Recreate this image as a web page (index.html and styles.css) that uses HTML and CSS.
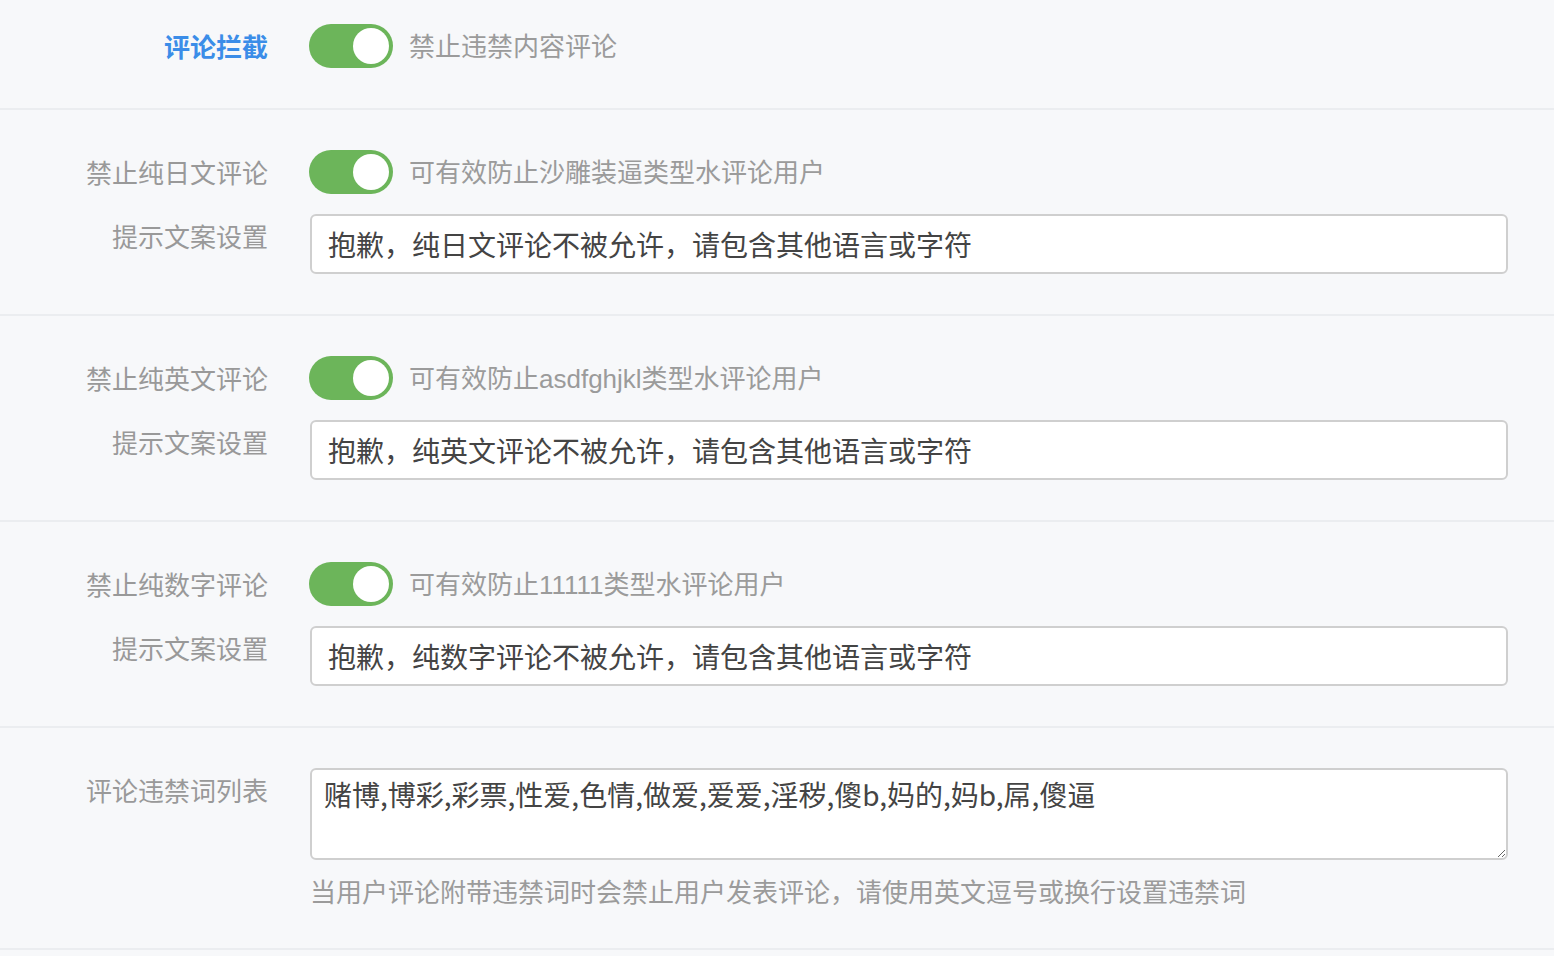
FILE: index.html
```html
<!DOCTYPE html>
<html lang="zh-CN">
<head>
<meta charset="utf-8">
<title>评论拦截</title>
<link rel="stylesheet" href="styles.css">
</head>
<body>
<div class="settings">
  <section class="group group-first">
    <div class="row">
      <div class="label label-title">评论拦截</div>
      <div class="control">
        <span class="switch on"><span class="knob"></span></span>
        <span class="desc">禁止违禁内容评论</span>
      </div>
    </div>
  </section>

  <section class="group">
    <div class="row">
      <div class="label">禁止纯日文评论</div>
      <div class="control">
        <span class="switch on"><span class="knob"></span></span>
        <span class="desc">可有效防止沙雕装逼类型水评论用户</span>
      </div>
    </div>
    <div class="row">
      <div class="label">提示文案设置</div>
      <div class="control">
        <input class="input" type="text" value="抱歉，纯日文评论不被允许，请包含其他语言或字符">
      </div>
    </div>
  </section>

  <section class="group">
    <div class="row">
      <div class="label">禁止纯英文评论</div>
      <div class="control">
        <span class="switch on"><span class="knob"></span></span>
        <span class="desc">可有效防止asdfghjkl类型水评论用户</span>
      </div>
    </div>
    <div class="row">
      <div class="label">提示文案设置</div>
      <div class="control">
        <input class="input" type="text" value="抱歉，纯英文评论不被允许，请包含其他语言或字符">
      </div>
    </div>
  </section>

  <section class="group">
    <div class="row">
      <div class="label">禁止纯数字评论</div>
      <div class="control">
        <span class="switch on"><span class="knob"></span></span>
        <span class="desc">可有效防止11111类型水评论用户</span>
      </div>
    </div>
    <div class="row">
      <div class="label">提示文案设置</div>
      <div class="control">
        <input class="input" type="text" value="抱歉，纯数字评论不被允许，请包含其他语言或字符">
      </div>
    </div>
  </section>

  <section class="group group-last">
    <div class="row">
      <div class="label">评论违禁词列表</div>
      <div class="control control-col">
        <textarea class="textarea">赌博,博彩,彩票,性爱,色情,做爱,爱爱,淫秽,傻b,妈的,妈b,屌,傻逼</textarea>
        <div class="help">当用户评论附带违禁词时会禁止用户发表评论，请使用英文逗号或换行设置违禁词</div>
      </div>
    </div>
  </section>
</div>
</body>
</html>
```

FILE: styles.css
```css
html, body {
  margin: 0;
  padding: 0;
  background: #f7f8fa;
}

body {
  font-family: "Noto Sans CJK SC", "Noto Sans", sans-serif;
  font-size: 26px;
  color: #999;
}

.settings {
  width: 100%;
}

.group {
  display: flex;
  flex-direction: column;
  gap: 20px;
  padding: 40px 46px 40px 0;
  border-bottom: 2px solid #ebedf0;
}

.group-first {
  padding-top: 24px;
}

.group-last {
  padding-bottom: 42px;
}

.row {
  display: flex;
  align-items: flex-start;
  gap: 42px;
}

.label {
  width: 268px;
  flex: none;
  text-align: right;
  line-height: 44px;
  color: #999;
  white-space: nowrap;
}

.label-title {
  color: #3b8de8;
  font-weight: 700;
}

.control {
  flex: 1;
  display: flex;
  align-items: center;
  gap: 16px;
  min-width: 0;
}

.control-col {
  flex-direction: column;
  align-items: stretch;
  gap: 16px;
}

.switch {
  position: relative;
  width: 84px;
  height: 44px;
  margin-left: -1px;
  border-radius: 22px;
  background: #6cb55a;
  flex: none;
  box-sizing: border-box;
}

.switch .knob {
  position: absolute;
  top: 4px;
  right: 4px;
  width: 36px;
  height: 36px;
  border-radius: 50%;
  background: #fff;
}

.desc {
  font-family: "Liberation Sans", "Noto Sans CJK SC", sans-serif;
  line-height: 42px;
  padding-top: 2px;
  color: #9b9b9b;
  white-space: nowrap;
}

.input {
  display: block;
  width: 100%;
  height: 60px;
  box-sizing: border-box;
  border: 2px solid #cfcfcf;
  border-radius: 6px;
  background: #fff;
  padding: 0 16px;
  font-family: "Noto Sans CJK SC", "Noto Sans", sans-serif;
  font-size: 28px;
  color: #444;
  outline: none;
}

.textarea {
  display: block;
  width: 100%;
  height: 92px;
  box-sizing: border-box;
  border: 2px solid #cfcfcf;
  border-radius: 6px;
  background: #fff;
  padding: 4px 12px;
  font-family: "Noto Sans CJK SC", "Noto Sans", sans-serif;
  font-size: 28px;
  line-height: 40px;
  color: #444;
  outline: none;
  resize: vertical;
  margin: 0;
}

.help {
  line-height: 30px;
  color: #9b9b9b;
  white-space: nowrap;
}
```
